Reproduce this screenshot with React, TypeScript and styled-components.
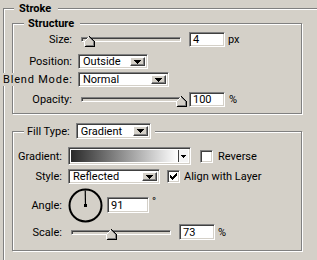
import React from "react";
import styled, { createGlobalStyle, css } from "styled-components";

const FACE = "#d4d0c8";
const SHADOW = "#808080";
const DARK = "#404040";

const Global = createGlobalStyle`
  html, body { margin: 0; padding: 0; background: ${FACE}; overflow: hidden; }
  body {
    font-family: Roboto, "Liberation Sans", Arial, sans-serif;
    font-size: 11px;
    line-height: 13px;
    color: #000;
  }
`;

const sunken = css`
  box-sizing: border-box;
  border: 1px solid;
  border-color: ${SHADOW} #fff #fff ${SHADOW};
  box-shadow: inset 1px 1px 0 ${DARK}, inset -1px -1px 0 ${FACE};
`;

const Page = styled.div`
  width: 317px;
  height: 260px;
  overflow: hidden;
  box-sizing: border-box;
  padding: 2px 0 0 3px;
`;

const Group = styled.fieldset<{ $width: number; $pad: string; $mt?: number }>`
  box-sizing: border-box;
  width: ${(p) => p.$width}px;
  min-width: 0;
  margin: ${(p) => p.$mt ?? 0}px 0 0 0;
  padding: ${(p) => p.$pad};
  border: 1px solid ${SHADOW};
  box-shadow: inset 1px 1px 0 #fff, 1px 1px 0 #fff;
`;

const Legend = styled.legend<{ $ml: number; $pad: string }>`
  margin-left: ${(p) => p.$ml}px;
  padding: ${(p) => p.$pad};
  background: ${FACE};
  line-height: 13px;
`;

const LegendTitle = styled.span`
  font-weight: bold;
  display: block;
`;

const LegendRow = styled.span`
  display: flex;
  align-items: center;
  gap: 6px;
`;

const Row = styled.div<{ $mt: number; $h: number }>`
  display: flex;
  align-items: center;
  margin-top: ${(p) => p.$mt}px;
  height: ${(p) => p.$h}px;
`;

const Label = styled.div<{ $w: number }>`
  flex: none;
  width: ${(p) => p.$w}px;
  margin-right: 6px;
  display: flex;
  justify-content: flex-end;
  white-space: nowrap;
`;

/* wide static label whose painted background hides the group frames behind it */
const WideText = styled.span`
  background: ${FACE};
  padding-left: 1px;
  letter-spacing: 0.8px;
  margin-right: -0.8px;
`;

const NumberBox = styled.div<{ $w: number; $h: number; $ml: number }>`
  ${sunken};
  flex: none;
  background: #fff;
  width: ${(p) => p.$w}px;
  height: ${(p) => p.$h}px;
  margin-left: ${(p) => p.$ml}px;
  padding-left: 3px;
  display: flex;
  align-items: center;
`;

const Unit = styled.span<{ $ml: number; $top?: boolean }>`
  margin-left: ${(p) => p.$ml}px;
  align-self: ${(p) => (p.$top ? "flex-start" : "center")};
  margin-top: ${(p) => (p.$top ? 8 : 0)}px;
`;

const SelectBox = styled.div<{ $w: number; $h: number }>`
  ${sunken};
  flex: none;
  background: #fff;
  width: ${(p) => p.$w}px;
  height: ${(p) => p.$h}px;
  padding: 2px 2px 2px 4px;
  display: flex;
  align-items: center;
`;

const SelectText = styled.span`
  flex: 1;
  white-space: nowrap;
  overflow: hidden;
`;

const DropButton = styled.span`
  flex: none;
  box-sizing: border-box;
  width: 15px;
  align-self: stretch;
  background: ${FACE};
  border: 1px solid;
  border-color: #fff ${DARK} ${DARK} #fff;
  box-shadow: inset -1px -1px 0 ${SHADOW};
  display: flex;
  align-items: center;
  justify-content: center;
`;

const Arrow = () => (
  <svg width="7" height="4" viewBox="0 0 7 4" shapeRendering="crispEdges">
    <polygon points="0,0 7,0 3.5,4" fill="#000" />
  </svg>
);

const SliderWrap = styled.div<{ $w: number; $ml: number; $mt: number }>`
  position: relative;
  flex: none;
  width: ${(p) => p.$w}px;
  height: 11px;
  margin-left: ${(p) => p.$ml}px;
  margin-top: ${(p) => p.$mt}px;
`;

const Track = styled.div`
  box-sizing: border-box;
  margin-top: 1px;
  width: 100%;
  height: 5px;
  border: 1px solid;
  border-color: ${SHADOW} #fff #fff ${SHADOW};
  box-shadow: inset 1px 1px 0 ${DARK};
  background: ${FACE};
`;

const ThumbSvg = styled.svg`
  position: absolute;
  top: 0;
`;

const Slider = ({ w, ml, mt, frac }: { w: number; ml: number; mt: number; frac: number }) => (
  <SliderWrap $w={w} $ml={ml} $mt={mt}>
    <Track />
    <ThumbSvg
      width="11"
      height="11"
      viewBox="0 0 11 11"
      shapeRendering="crispEdges"
      style={{ left: Math.round(1 + (w - 6) * frac) }}
    >
      <polygon points="0.5,10.5 0.5,5.5 5.5,0.5 10.5,5.5 10.5,10.5" fill={FACE} />
      <path d="M0.5 10 V5.5 L5.5 0.5" stroke="#fff" fill="none" />
      <path d="M5.5 0.5 L10.5 5.5 V10.5 H0.5" stroke="#000" fill="none" />
      <path d="M5.5 1.5 L9.5 5.5 V9.5 H1.5" stroke={SHADOW} fill="none" />
    </ThumbSvg>
  </SliderWrap>
);

const GradientField = styled.div`
  ${sunken};
  flex: none;
  width: 123px;
  height: 18px;
  padding: 2px;
  display: flex;
  background: #fff;
`;

const GradientFill = styled.div`
  flex: 1;
  background: linear-gradient(to right, #2a2a2a, #ffffff);
`;

const GradientArrow = styled.div`
  flex: none;
  width: 9px;
  border-left: 1px solid ${DARK};
  background: #f4f4f4;
  display: flex;
  align-items: center;
  justify-content: center;
`;

const SmallArrow = () => (
  <svg width="5" height="3" viewBox="0 0 5 3" shapeRendering="crispEdges">
    <polygon points="0,0 5,0 2.5,3" fill="#000" />
  </svg>
);

const CheckBox = styled.div<{ $ml: number }>`
  ${sunken};
  flex: none;
  width: 13px;
  height: 13px;
  margin-left: ${(p) => p.$ml}px;
  background: #fff;
  display: flex;
  align-items: center;
  justify-content: center;
`;

const CheckText = styled.span<{ $ml: number }>`
  margin-left: ${(p) => p.$ml}px;
  white-space: nowrap;
`;

const Check = () => (
  <svg width="7" height="7" viewBox="0 0 7 7" shapeRendering="crispEdges">
    <path d="M0 2 V5 L2 7 L7 2 V-1 L2 4 Z" fill="#000" />
  </svg>
);

const Dial = ({ angle }: { angle: number }) => {
  const r = (angle * Math.PI) / 180;
  const cx = 17.5;
  const cy = 17.5;
  const x2 = cx + Math.cos(r) * 15;
  const y2 = cy - Math.sin(r) * 15;
  return (
    <svg width="35" height="35" viewBox="0 0 35 35">
      <circle cx={cx} cy={cy} r="16" fill="none" stroke="#000" strokeWidth="2" />
      <line x1={cx} y1={cy} x2={x2} y2={y2} stroke="#000" strokeWidth="1.2" />
      <rect x={cx - 1.5} y={cy - 1.5} width="3" height="3" fill="#000" />
    </svg>
  );
};

export default function App() {
  return (
    <>
      <Global />
      <Page>
        <Group $width={330} $pad="2px 0 20px 8px">
          <Legend $ml={2} $pad="0 7px 0 5px">
            <LegendTitle>Stroke</LegendTitle>
          </Legend>

          <Group $width={290} $pad="2px 0 6px 0">
            <Legend $ml={11} $pad="0 6px 0 4px">
              <LegendTitle>Structure</LegendTitle>
            </Legend>

            <Row $mt={0} $h={15}>
              <Label $w={59}>Size:</Label>
              <Slider w={100} ml={3} mt={4} frac={0.016} />
              <NumberBox $w={36} $h={15} $ml={8}>4</NumberBox>
              <Unit $ml={3}>px</Unit>
            </Row>

            <Row $mt={7} $h={15}>
              <Label $w={59}>Position:</Label>
              <SelectBox $w={70} $h={15}>
                <SelectText>Outside</SelectText>
                <DropButton>
                  <Arrow />
                </DropButton>
              </SelectBox>
            </Row>

            <Row $mt={3} $h={15}>
              <Label $w={59}>
                <WideText>Blend Mode:</WideText>
              </Label>
              <SelectBox $w={91} $h={15}>
                <SelectText>Normal</SelectText>
                <DropButton>
                  <Arrow />
                </DropButton>
              </SelectBox>
            </Row>

            <Row $mt={5} $h={15}>
              <Label $w={59}>Opacity:</Label>
              <Slider w={100} ml={3} mt={4} frac={1} />
              <NumberBox $w={36} $h={15} $ml={8}>100</NumberBox>
              <Unit $ml={4}>%</Unit>
            </Row>
          </Group>

          <Group $width={290} $pad="8px 0 10px 0" $mt={9}>
            <Legend $ml={11} $pad="0 4px 0 3px">
              <LegendRow>
                Fill Type:
                <SelectBox $w={75} $h={16}>
                  <SelectText>Gradient</SelectText>
                  <DropButton>
                    <Arrow />
                  </DropButton>
                </SelectBox>
              </LegendRow>
            </Legend>

            <Row $mt={0} $h={18}>
              <Label $w={49}>Gradient:</Label>
              <GradientField>
                <GradientFill />
                <GradientArrow>
                  <SmallArrow />
                </GradientArrow>
              </GradientField>
              <CheckBox $ml={9} />
              <CheckText $ml={5}>Reverse</CheckText>
            </Row>

            <Row $mt={4} $h={15}>
              <Label $w={49}>Style:</Label>
              <SelectBox $w={92} $h={15}>
                <SelectText>Reflected</SelectText>
                <DropButton>
                  <Arrow />
                </DropButton>
              </SelectBox>
              <CheckBox $ml={7}>
                <Check />
              </CheckBox>
              <CheckText $ml={4}>Align with Layer</CheckText>
            </Row>

            <Row $mt={3} $h={36}>
              <Label $w={49}>Angle:</Label>
              <Dial angle={91} />
              <NumberBox $w={42} $h={16} $ml={4}>91</NumberBox>
              <Unit $ml={3} $top>°</Unit>
            </Row>

            <Row $mt={1} $h={16}>
              <Label $w={49}>Scale:</Label>
              <Slider w={100} ml={3} mt={4} frac={0.36} />
              <NumberBox $w={36} $h={16} $ml={8}>73</NumberBox>
              <Unit $ml={3}>%</Unit>
            </Row>
          </Group>
        </Group>
      </Page>
    </>
  );
}
